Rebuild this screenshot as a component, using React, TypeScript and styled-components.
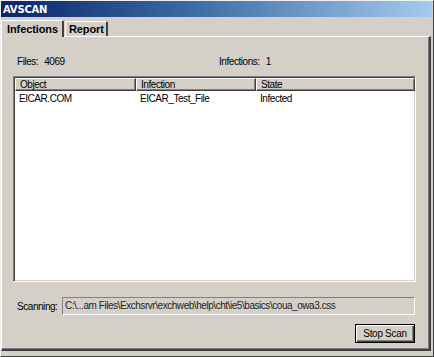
import React from 'react';
import styled, { createGlobalStyle } from 'styled-components';

const GlobalStyle = createGlobalStyle`
  html, body {
    margin: 0;
    padding: 0;
    background: #d4d0c8;
  }
  body {
    font-family: 'Liberation Sans', Arial, sans-serif;
    font-size: 10px;
    letter-spacing: -0.45px;
    color: #000;
  }
`;

type Infection = {
  object: string;
  name: string;
  state: string;
};

const infections: Infection[] = [{ object: 'EICAR.COM', name: 'EICAR_Test_File', state: 'Infected' }];

const columns = [
  { label: 'Object', width: 121 },
  { label: 'Infection', width: 120 },
  { label: 'State', width: 159 },
];

const App: React.FC = () => {
  return (
    <>
      <GlobalStyle />
      <Window>
        <TitleBar>AVSCAN</TitleBar>
        <Body>
          <TabStrip>
            <Tab $active>Infections</Tab>
            <Tab>Report</Tab>
          </TabStrip>
          <Panel>
            <StatsRow>
              <Stat $width={202}>
                Files:<Value>4069</Value>
              </Stat>
              <Stat>
                Infections:<Value>1</Value>
              </Stat>
            </StatsRow>
            <ListView>
              <HeaderRow>
                {columns.map((c) => (
                  <HeaderCell key={c.label} $width={c.width}>
                    {c.label}
                  </HeaderCell>
                ))}
              </HeaderRow>
              {infections.map((item) => (
                <Row key={item.object}>
                  <Cell $width={columns[0].width}>{item.object}</Cell>
                  <Cell $width={columns[1].width}>{item.name}</Cell>
                  <Cell $width={columns[2].width}>{item.state}</Cell>
                </Row>
              ))}
            </ListView>
            <ScanRow>
              <ScanLabel>Scanning:</ScanLabel>
              <PathField>C:\...am Files\Exchsrvr\exchweb\help\cht\ie5\basics\coua_owa3.css</PathField>
            </ScanRow>
            <ButtonRow>
              <Button>Stop Scan</Button>
            </ButtonRow>
          </Panel>
        </Body>
      </Window>
    </>
  );
};

export default App;

const Window = styled.div`
  box-sizing: border-box;
  width: 434px;
  height: 357px;
  display: flex;
  flex-direction: column;
  background: #d4d0c8;
  border-top: 1px solid #f0f0f0;
  border-left: 1px solid #f0f0f0;
  border-right: 1px solid #404040;
  border-bottom: 1px solid #404040;
  padding: 0 1px 3px 0;
`;

const TitleBar = styled.div`
  height: 16px;
  display: flex;
  align-items: center;
  padding-left: 2px;
  background: linear-gradient(to right, #0a246a 0%, #3a6ea5 45%, #a6caf0 100%);
  color: #fff;
  font-family: Tahoma, 'DejaVu Sans', sans-serif;
  font-weight: bold;
  font-size: 10px;
  letter-spacing: -0.2px;
`;

const Body = styled.div`
  flex: 1;
  display: flex;
  flex-direction: column;
  padding: 2px 1px 2px 0;
`;

const TabStrip = styled.div`
  display: flex;
  align-items: flex-end;
  height: 18px;
  position: relative;
  z-index: 1;
  margin-bottom: -1px;
`;

const Tab = styled.div<{ $active?: boolean }>`
  box-sizing: border-box;
  height: ${(p) => (p.$active ? '17px' : '15px')};
  padding: ${(p) => (p.$active ? '1px 4px 0 5px' : '0 2px 0 3px')};
  margin-left: ${(p) => (p.$active ? '0' : '1px')};
  margin-bottom: ${(p) => (p.$active ? '0' : '1px')};
  background: #d4d0c8;
  border-top: 1px solid #fff;
  border-left: 1px solid #fff;
  border-right: 2px solid #404040;
  border-top-left-radius: 2px;
  border-top-right-radius: 2px;
  font-family: 'Liberation Sans', Arial, sans-serif;
  font-weight: bold;
  font-size: 11px;
  letter-spacing: -0.1px;
  line-height: 14px;
  color: #000;
  display: flex;
  align-items: flex-start;
`;

const Panel = styled.div`
  flex: 1;
  display: flex;
  flex-direction: column;
  border-top: 1px solid #fff;
  border-left: 1px solid #fff;
  border-right: 2px solid #404040;
  border-bottom: 2px solid #404040;
  box-shadow: inset -1px -1px 0 #808080;
  padding: 0 14px 0 11px;
`;

const StatsRow = styled.div`
  display: flex;
  margin-top: 19px;
  padding-left: 4px;
  height: 12px;
  line-height: 12px;
`;

const Stat = styled.div<{ $width?: number }>`
  width: ${(p) => (p.$width ? `${p.$width}px` : 'auto')};
  white-space: nowrap;
`;

const Value = styled.span`
  margin-left: 6px;
`;

const ListView = styled.div`
  box-sizing: border-box;
  margin-top: 8px;
  width: 403px;
  height: 206px;
  background: #fff;
  border-top: 1px solid #808080;
  border-left: 1px solid #808080;
  border-right: 1px solid #fff;
  border-bottom: 1px solid #fff;
  box-shadow: inset 1px 1px 0 #404040, inset -1px -1px 0 #d4d0c8;
  padding: 1px;
`;

const HeaderRow = styled.div`
  display: flex;
  height: 13px;
`;

const HeaderCell = styled.div<{ $width: number }>`
  box-sizing: border-box;
  width: ${(p) => p.$width}px;
  flex: none;
  background: #d4d0c8;
  border-top: 1px solid #fff;
  border-left: 1px solid #fff;
  border-right: 1px solid #404040;
  border-bottom: 1px solid #404040;
  box-shadow: inset -1px -1px 0 #808080;
  padding-left: 4px;
  line-height: 11px;
  white-space: nowrap;
  overflow: hidden;
`;

const Row = styled.div`
  display: flex;
  height: 14px;
  align-items: center;
`;

const Cell = styled.div<{ $width: number }>`
  width: ${(p) => p.$width}px;
  flex: none;
  padding-left: 4px;
  box-sizing: border-box;
  white-space: nowrap;
  overflow: hidden;
`;

const ScanRow = styled.div`
  display: flex;
  align-items: center;
  margin-top: 15px;
  padding-left: 4px;
`;

const ScanLabel = styled.div`
  width: 45px;
  flex: none;
`;

const PathField = styled.div`
  box-sizing: border-box;
  width: 356px;
  height: 18px;
  line-height: 16px;
  padding-left: 2px;
  background: #d4d0c8;
  border-top: 1px solid #808080;
  border-left: 1px solid #808080;
  border-right: 1px solid #fff;
  border-bottom: 1px solid #fff;
  white-space: nowrap;
  overflow: hidden;
  color: #222;
`;

const ButtonRow = styled.div`
  display: flex;
  justify-content: flex-end;
  margin-top: 9px;
`;

const Button = styled.button`
  box-sizing: border-box;
  width: 60px;
  height: 19px;
  margin: 0;
  padding: 0;
  background: #d4d0c8;
  font-family: 'Liberation Sans', Arial, sans-serif;
  font-size: 10px;
  letter-spacing: -0.3px;
  color: #000;
  border: 1px solid #000;
  box-shadow: inset 1px 1px 0 #fff, inset -1px -1px 0 #404040, inset -2px -2px 0 #808080;
`;
